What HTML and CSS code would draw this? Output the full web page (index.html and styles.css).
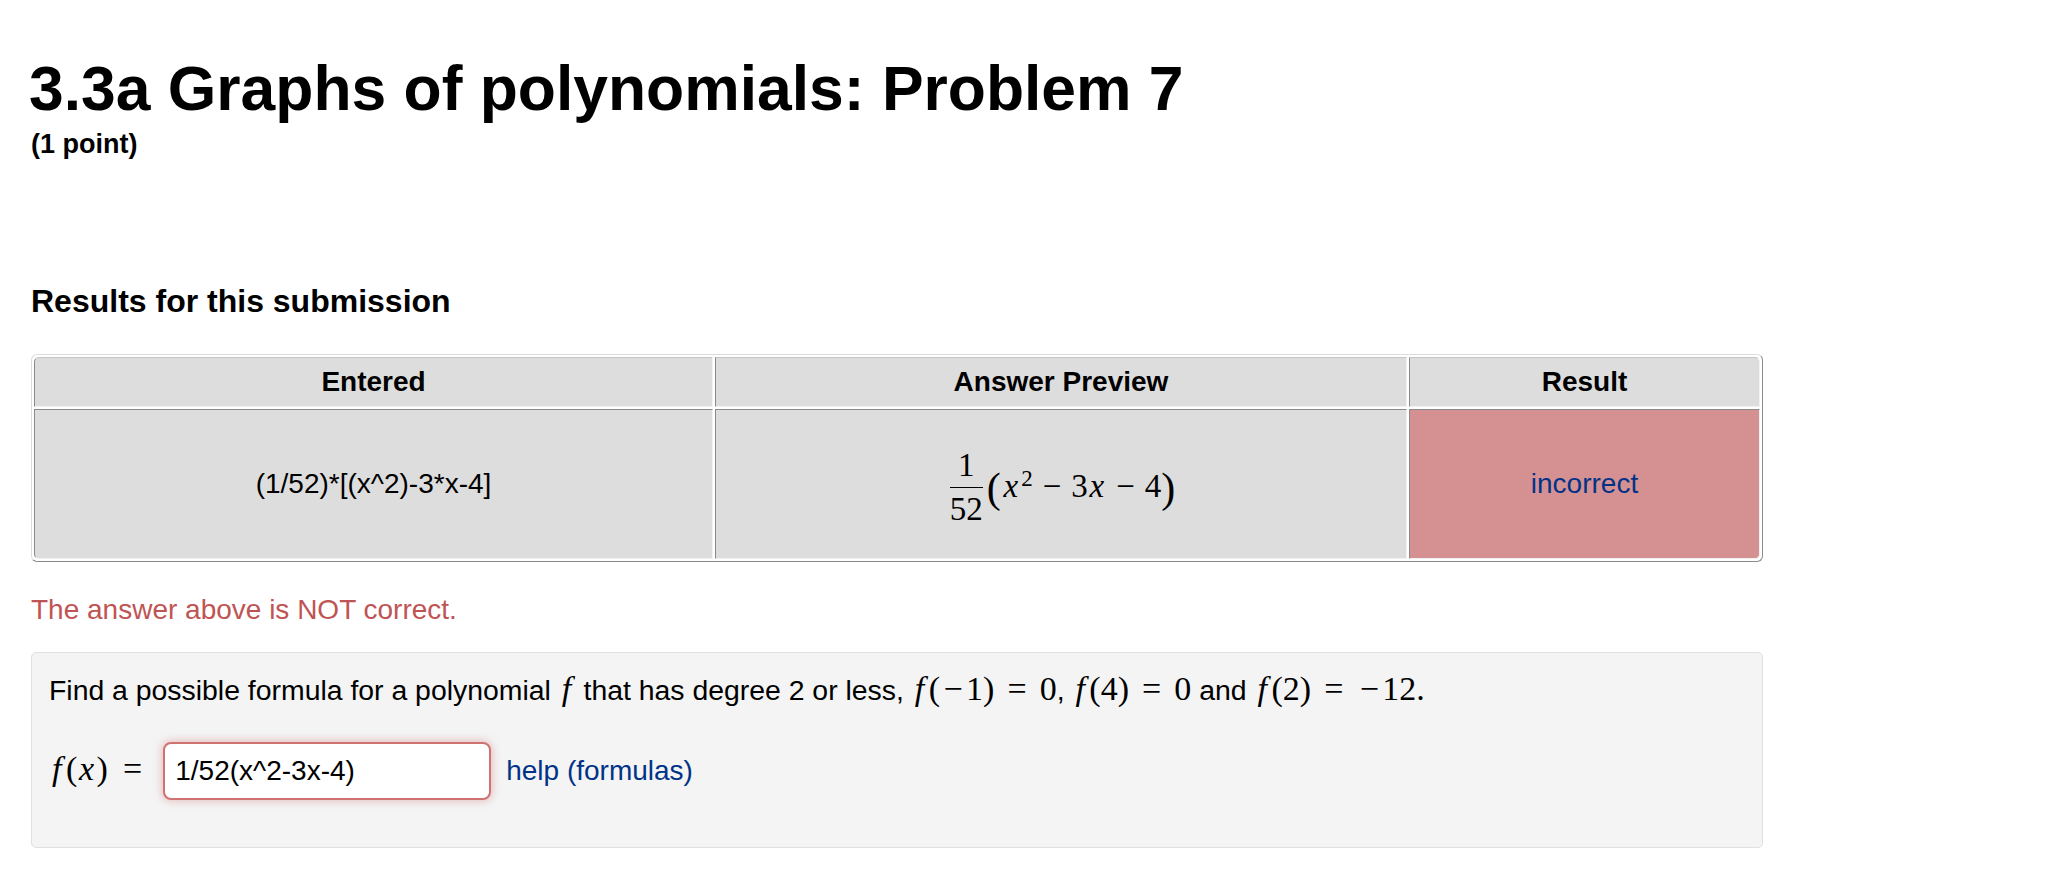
FILE: index.html
```html
<!DOCTYPE html>
<html lang="en">
<head>
<meta charset="utf-8">
<title>3.3a Graphs of polynomials: Problem 7</title>
<link rel="stylesheet" href="styles.css">
</head>
<body>
<div class="page">
  <h1 class="title">3.3a Graphs of polynomials: Problem 7</h1>
  <div class="points">(1 point)</div>

  <h2 class="results-heading">Results for this submission</h2>

  <table class="attempt">
    <thead>
      <tr class="head">
        <th class="c1">Entered</th>
        <th class="c2">Answer Preview</th>
        <th class="c3">Result</th>
      </tr>
    </thead>
    <tbody>
      <tr class="row">
        <td class="entered">(1/52)*[(x^2)-3*x-4]</td>
        <td class="preview"><span class="math pv"><span class="frac"><span class="num">1</span><span class="den">52</span></span><span class="bigp open">(</span><i class="mx">x</i><sup class="sup">2</sup><span class="bin">−</span>3<i class="mx">x</i><span class="bin">−</span>4<span class="bigp close">)</span></span></td>
        <td class="result incorrect"><a class="link" href="#">incorrect</a></td>
      </tr>
    </tbody>
  </table>

  <div class="feedback">The answer above is NOT correct.</div>

  <div class="problem">
    <p class="statement">Find a possible formula for a polynomial <span class="math"><i class="mf">f</i></span> that has degree 2 or less, <span class="math"><i class="mf">f</i>(<span class="un">−</span>1)<span class="rel">=</span>0</span>, <span class="math"><i class="mf">f</i>(4)<span class="rel">=</span>0</span> and <span class="math"><i class="mf">f</i>(2)<span class="rel">=</span><span class="un">−</span>12.</span></p>
    <div class="answer-row">
      <span class="math lhs"><i class="mf">f</i>(<i class="mx">x</i>)<span class="rel last">=</span></span>
      <input class="answer" type="text" value="1/52(x^2-3x-4)" readonly>
      <a class="link help" href="#">help (formulas)</a>
    </div>
  </div>
</div>
</body>
</html>
```

FILE: styles.css
```css
* {
  box-sizing: border-box;
}

body {
  margin: 0;
  background: #ffffff;
  color: #000000;
  font-family: "Liberation Sans", Arial, Helvetica, sans-serif;
}

.page {
  width: 1732px;
  margin-left: 31px;
  padding-top: 54px;
  padding-bottom: 20px;
}

.title {
  margin: 0 0 0 -2px;
  font-size: 62.4px;
  line-height: 70px;
  font-weight: bold;
}

.points {
  margin-top: 4px;
  font-size: 27px;
  line-height: 32px;
  font-weight: bold;
}

.results-heading {
  margin: 122px 0 0;
  font-size: 32px;
  line-height: 38px;
  font-weight: bold;
}

/* results table */
.attempt {
  margin-top: 34px;
  width: 1732px;
  table-layout: fixed;
  border-collapse: separate;
  border-spacing: 2px;
  border: 1px solid;
  border-color: #dcdcdc #8a8a8a #8a8a8a #dcdcdc;
  border-radius: 6px;
}

.attempt th,
.attempt td {
  padding: 0;
  border: 1px solid;
  border-color: #8a8a8a #f2f2f2 #f2f2f2 #8a8a8a;
  background: #dddddd;
  text-align: center;
  vertical-align: middle;
  font-size: 28px;
}

.attempt th {
  font-weight: bold;
  border-top-color: #c4c4c4;
}

.attempt .c1 {
  width: 679px;
  border-top-left-radius: 5px;
}

.attempt .c2 {
  width: 692px;
}

.attempt .c3 {
  border-top-right-radius: 5px;
}

.head {
  height: 50px;
}

.row {
  height: 150px;
}

.entered {
  border-bottom-left-radius: 5px;
}

.attempt td.preview {
  padding-top: 6px;
}

.result {
  border-bottom-right-radius: 5px;
}

.attempt td.incorrect {
  background: #d59192;
}

.link {
  color: #003388;
  text-decoration: none;
}

/* math */
.math {
  font-family: "Liberation Serif", "Times New Roman", serif;
  font-size: 34px;
  line-height: 1;
  white-space: nowrap;
}

.math.pv {
  font-size: 33px;
}

.math i {
  font-style: italic;
}

.mf {
  padding: 0 0.13em 0 0.09em;
}

.mx {
  padding: 0 0.07em 0 0.05em;
}

.rel {
  margin: 0 0.385em;
}

.rel.last {
  margin-right: 0;
  margin-left: 0.45em;
}

.bin {
  margin: 0 0.3em;
}

.un {
  margin: 0 0.1em;
}

.frac {
  display: inline-block;
  vertical-align: -23px;
  padding: 0 3px;
  margin-right: 1px;
  text-align: center;
}

.num {
  display: block;
  line-height: 32px;
  margin-bottom: 6px;
}

.den {
  display: block;
  line-height: 32px;
  border-top: 1.3px solid #000;
  padding-top: 5px;
}

.bigp {
  font-size: 42px;
  vertical-align: -5px;
  line-height: 1;
}

.bigp.open {
  margin-right: 1px;
}

.sup {
  font-size: 23px;
  line-height: 1;
  vertical-align: 11px;
  margin-left: 1px;
}

/* feedback */
.feedback {
  margin-top: 28px;
  font-size: 28px;
  line-height: 40px;
  color: #bf5454;
}

/* problem box */
.problem {
  margin-top: 22px;
  background: #f4f4f4;
  border: 1px solid #e0e0e0;
  border-radius: 5px;
  padding: 17px 16px 47px 17px;
}

.statement {
  margin: 0;
  font-size: 28.4px;
  line-height: 40px;
}

.answer-row {
  margin-top: 32px;
  display: flex;
  align-items: baseline;
  font-size: 28px;
}

.lhs {
  margin-right: 21px;
}

.answer {
  width: 328px;
  height: 58px;
  padding: 0 10px;
  border: 2px solid #cf7272;
  border-radius: 8px;
  background: #ffffff;
  box-shadow: 0 0 8px 1px rgba(200, 80, 80, 0.35);
  font-family: "Liberation Sans", Arial, Helvetica, sans-serif;
  font-size: 28px;
  color: #000000;
  outline: none;
}

.help {
  margin-left: 15px;
  font-size: 28px;
}
```
